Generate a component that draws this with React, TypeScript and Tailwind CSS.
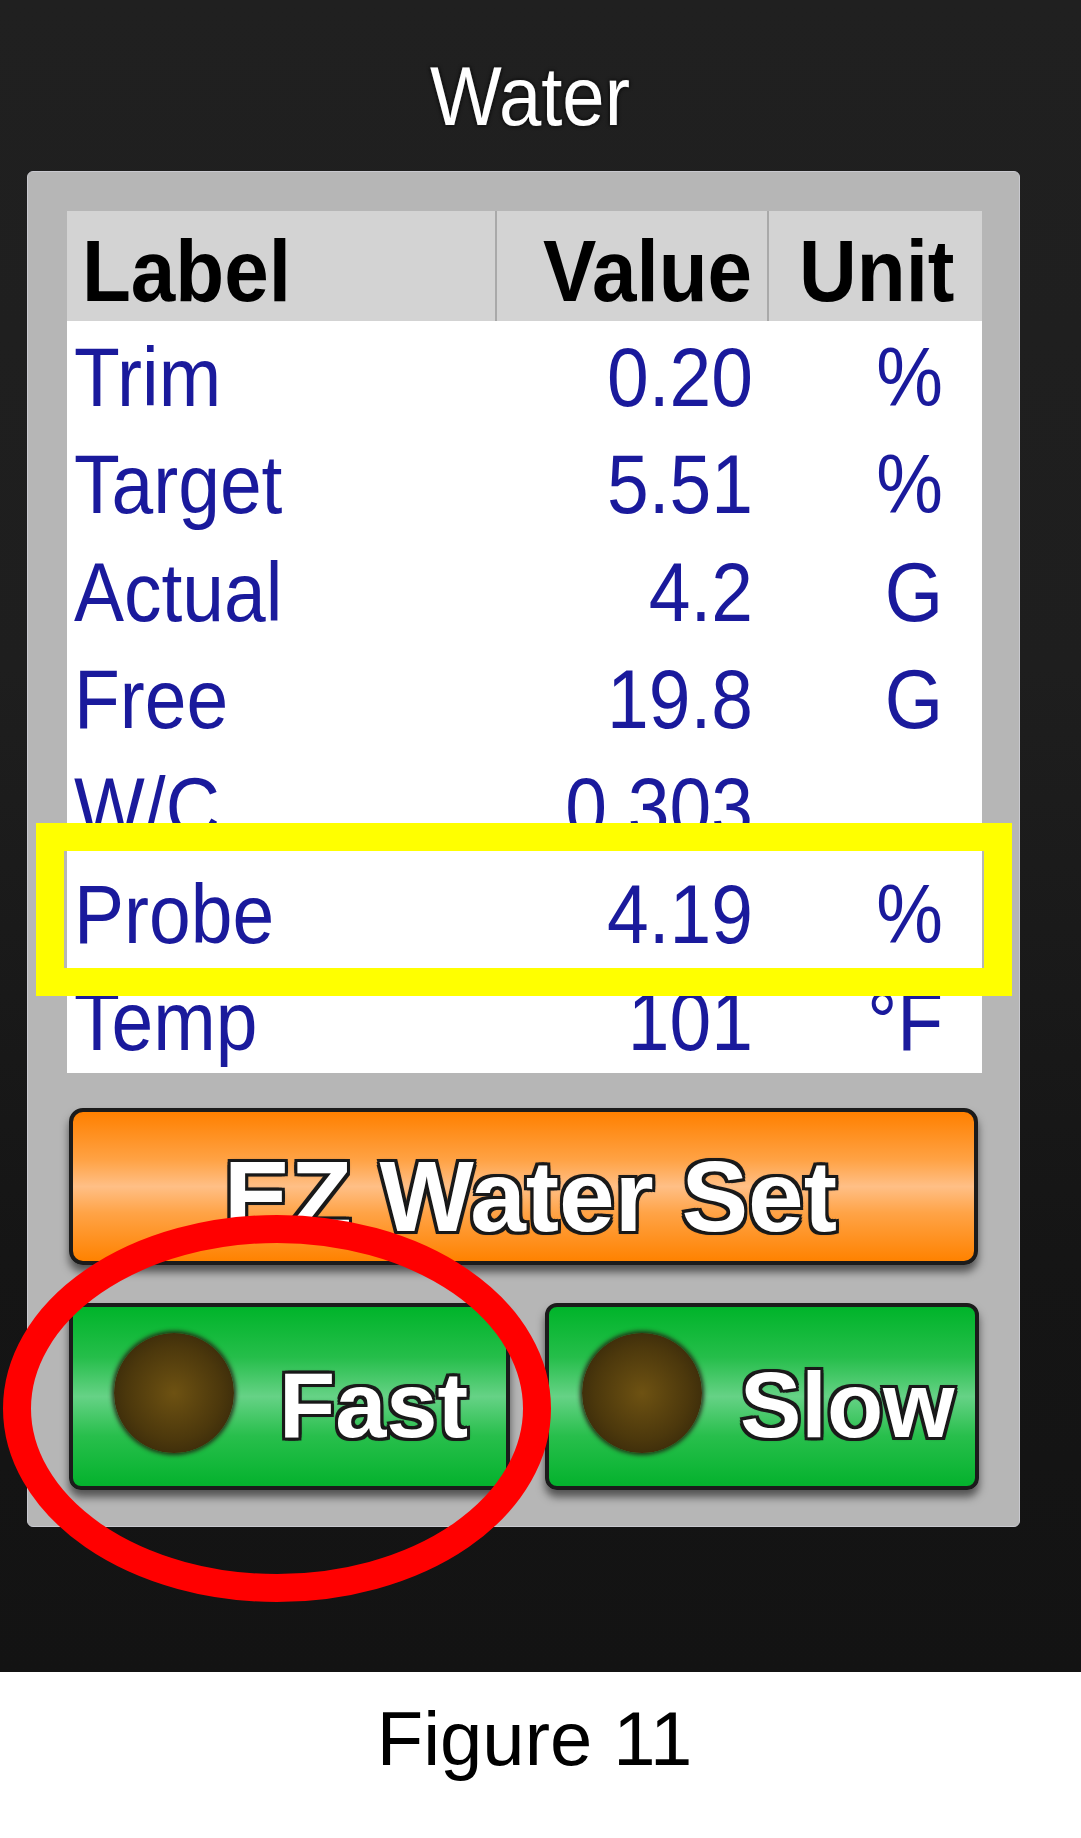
interface Reading {
  label: string;
  value: string;
  unit: string;
}

const readings: Reading[] = [
  { label: "Trim", value: "0.20", unit: "%" },
  { label: "Target", value: "5.51", unit: "%" },
  { label: "Actual", value: "4.2", unit: "G" },
  { label: "Free", value: "19.8", unit: "G" },
  { label: "W/C", value: "0.303", unit: "" },
  { label: "Probe", value: "4.19", unit: "%" },
  { label: "Temp", value: "101", unit: "°F" },
];

const sans = "font-['Liberation_Sans',Arial,sans-serif]";
const outline =
  "[text-shadow:0_0_4px_#111,3px_3px_0_#1c1c1c,-3px_-3px_0_#1c1c1c,3px_-3px_0_#1c1c1c,-3px_3px_0_#1c1c1c,0_3px_0_#1c1c1c,0_-3px_0_#1c1c1c,3px_0_0_#1c1c1c,-3px_0_0_#1c1c1c]";

function Tall({ children }: { children: React.ReactNode }) {
  // the source UI font is narrower than Arial, so stretch the glyphs a bit upward
  return <span className="inline-block origin-[50%_85%] scale-y-110 leading-none">{children}</span>;
}

function ReadingRow({ r }: { r: Reading }) {
  return (
    <div className="flex h-[107.4px] text-[75px] leading-none text-[#1a1a9c]">
      <div className="w-[428px] pl-[7px] pt-[22px]">
        <Tall>{r.label}</Tall>
      </div>
      <div className="w-[272px] pr-[14px] pt-[22px] text-right">
        <Tall>{r.value}</Tall>
      </div>
      <div className="flex-1 pr-[39px] pt-[22px] text-right">
        <Tall>{r.unit}</Tall>
      </div>
    </div>
  );
}

function Led() {
  return (
    <div className="h-[120px] w-[120px] shrink-0 rounded-full bg-[radial-gradient(circle_at_50%_50%,#6e5212_0%,#4c380c_55%,#35270a_85%,#2a1f12_100%)] shadow-[0_0_4px_2px_rgba(35,25,15,0.85)]" />
  );
}

function ModeButton({ label, box }: { label: string; box: string }) {
  return (
    <div
      className={`flex h-[187px] items-center rounded-[12px] border-[4px] border-[#1b1b1b] bg-[linear-gradient(to_bottom,#00b42a_0%,#25be4a_28%,#66d286_50%,#28bf4c_72%,#04b22d_100%)] shadow-[0_7px_9px_rgba(0,0,0,0.55)] ${box}`}
    >
      <div className="mb-[7px]">
        <Led />
      </div>
      <span className={`mt-[18px] text-[92px] font-bold leading-none text-white ${outline}`}>{label}</span>
    </div>
  );
}

export default function App() {
  return (
    <div className={`flex h-[1838px] w-[1081px] flex-col ${sans}`}>
      <div className="relative h-[1672px] overflow-hidden bg-[linear-gradient(to_bottom,#202020_0%,#1e1e1e_40%,#151515_75%,#131313_100%)]">
        <div className="w-[993px] pl-[67px] pt-[61px] text-center text-[76px] leading-none text-white [text-shadow:0_0_4px_#000,0_0_2px_#000,0_0_1px_#fff]">
          <Tall>Water</Tall>
        </div>

        <div className="mt-[34px] ml-[27px] w-[993px] rounded-[6px] border border-[#c9c9cf] bg-[#b6b6b6] pb-[36px] pl-[39px] pr-[37px] pt-[39px]">
          <div className="bg-white">
            <div className="flex h-[110px] bg-[#d3d3d3] text-[80px] font-bold leading-none text-black">
              <div className="w-[428px] pl-[15px] pt-[23px]">
                <Tall>Label</Tall>
              </div>
              <div className="w-[272px] border-l-2 border-[#a9a9a9] pr-[15px] pt-[23px] text-right">
                <Tall>Value</Tall>
              </div>
              <div className="flex-1 border-l-2 border-[#a9a9a9] pl-[30px] pt-[23px]">
                <Tall>Unit</Tall>
              </div>
            </div>
            {readings.map((r) => (
              <ReadingRow key={r.label} r={r} />
            ))}
          </div>

          <div className="mt-[35px] mr-[4px] ml-[2px] flex h-[157px] items-start justify-center rounded-[14px] border-[4px] border-[#1b1b1b] bg-[linear-gradient(to_bottom,#ff8000_0%,#ffa244_32%,#ffbf86_50%,#ffa346_68%,#ff8200_100%)] pl-[14px] pt-[34px] shadow-[0_7px_9px_rgba(0,0,0,0.55)]">
            <span className={`text-[100px] font-bold leading-none text-white ${outline}`}>EZ Water Set</span>
          </div>

          <div className="mt-[38px] mr-[3px] ml-[2px] flex gap-[35px]">
            <ModeButton label="Fast" box="w-[441px] gap-[45px] pl-[41px]" />
            <ModeButton label="Slow" box="flex-1 gap-[38px] pl-[33px]" />
          </div>
        </div>

        {/* annotation marks laid over the screenshot */}
        <div className="absolute left-[36px] top-[823px] h-[173px] w-[976px] border-[28px] border-[#ffff00]" />
        <svg className="absolute left-[3px] top-[1215px]" width="548" height="387" viewBox="0 0 548 387">
          <ellipse cx="274" cy="193.5" rx="260" ry="179.5" fill="none" stroke="#ff0000" strokeWidth="28" />
        </svg>
      </div>

      <div className="h-[166px] bg-white pr-[12px] pt-[29px] text-center text-[76px] leading-none text-black">
        Figure 11
      </div>
    </div>
  );
}
